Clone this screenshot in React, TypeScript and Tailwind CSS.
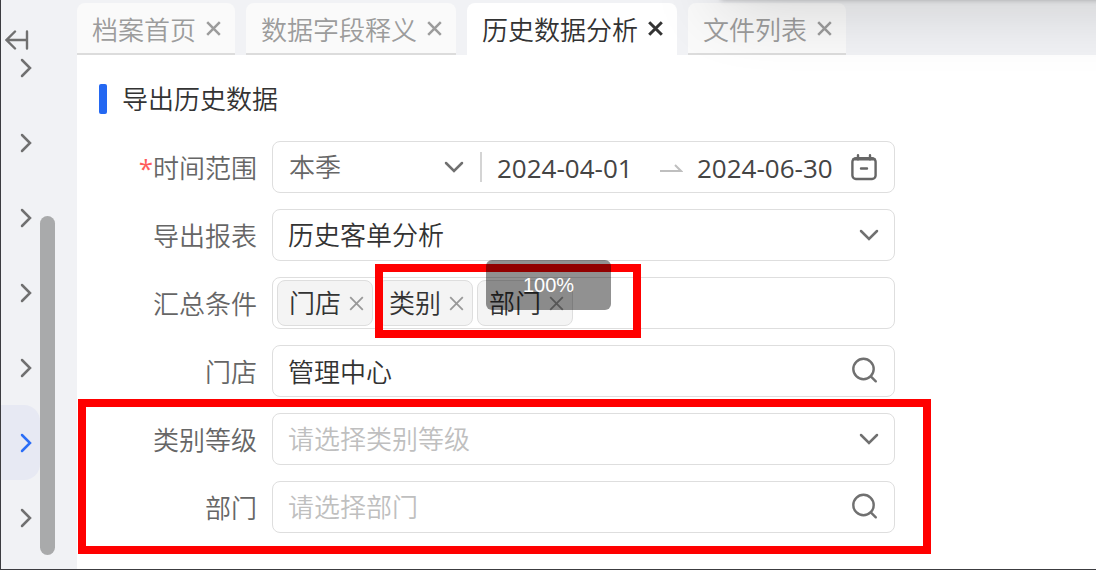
import type { ReactNode } from 'react';

interface Tab {
  label: string;
  active?: boolean;
}

const TABS: Tab[] = [
  { label: '档案首页' },
  { label: '数据字段释义' },
  { label: '历史数据分析', active: true },
  { label: '文件列表' },
];

const MENU_ITEMS = [0, 1, 2, 3, 4, 5, 6];
const ACTIVE_MENU_ITEM = 5;
const CONDITIONS = ['门店', '类别', '部门'];

const FIELD =
  'w-full h-13 rounded-lg border border-[#dedede] bg-white pl-[15px] pr-12 text-[26px] leading-[34px] outline-none placeholder:text-[#bfbfbf]';

function CloseIcon({ strokeWidth }: { strokeWidth: number }) {
  return (
    <svg width="15" height="15" viewBox="0 0 15 15" fill="none" stroke="currentColor" strokeWidth={strokeWidth}>
      <path d="M1.2 1.2l12.6 12.6M13.8 1.2L1.2 13.8" />
    </svg>
  );
}

function ChevronDown() {
  return (
    <svg width="20" height="12" viewBox="0 0 20 12" fill="none" stroke="#707070" strokeWidth="2.5" strokeLinecap="round">
      <path d="M2 2l8 8 8-8" />
    </svg>
  );
}

function ChevronRight() {
  return (
    <svg width="12" height="20" viewBox="0 0 12 20" fill="none" stroke="currentColor" strokeWidth="2.5" strokeLinecap="round">
      <path d="M2 2l8 8-8 8" />
    </svg>
  );
}

function SearchIcon() {
  return (
    <svg width="28" height="28" viewBox="0 0 28 28" fill="none" stroke="#707070" strokeWidth="2.4" strokeLinecap="round">
      <circle cx="12.5" cy="12" r="10.2" />
      <path d="M19.8 19.3l5 5" />
    </svg>
  );
}

function CalendarIcon() {
  return (
    <svg width="28" height="28" viewBox="0 0 28 28" fill="none" stroke="#666" strokeWidth="2.4" strokeLinecap="round">
      <rect x="2.4" y="5.2" width="23.2" height="20.8" rx="3.5" />
      <path d="M3.4 6.2h21.2" />
      <path d="M8 2.2v4M20 2.2v4M11 15.5h6" />
    </svg>
  );
}

function FormRow({ label, htmlFor, required, children }: { label: string; htmlFor: string; required?: boolean; children: ReactNode }) {
  return (
    <div className="flex items-center gap-[15px]">
      <label htmlFor={htmlFor} className="w-[180px] shrink-0 pt-0.5 text-right text-[26px] leading-[34px] text-[#666]">
        {required && <span className="font-normal text-[#ff5c5c]">*</span>}
        {label}
      </label>
      <div className="relative max-w-[623px] flex-1">{children}</div>
    </div>
  );
}

function SelectField({ id, value, placeholder }: { id: string; value: string; placeholder?: boolean }) {
  return (
    <>
      <select id={id} className={`${FIELD} appearance-none ${placeholder ? 'text-[#bfbfbf]' : 'text-[#333]'}`}>
        <option>{value}</option>
      </select>
      <span className="pointer-events-none absolute inset-y-0 right-4 flex items-center">
        <ChevronDown />
      </span>
    </>
  );
}

function SearchField({ id, value, placeholder }: { id: string; value?: string; placeholder?: string }) {
  return (
    <>
      <input id={id} type="text" defaultValue={value} placeholder={placeholder} className={`${FIELD} text-[#333]`} />
      <button type="button" aria-label="搜索" className="absolute inset-y-0 right-4 flex items-center">
        <SearchIcon />
      </button>
    </>
  );
}

function Sidebar() {
  return (
    <aside className="flex w-[76px] shrink-0 bg-[#f1f2f5]">
      <div className="w-[39px] pt-[30px]">
        <button type="button" aria-label="收起" className="block h-5 pl-1">
          <svg width="24" height="20" viewBox="0 0 24 20" fill="none" stroke="#707070" strokeWidth="2.4" strokeLinecap="round">
            <path d="M22 1.5v17M21 10H2M10 1.5L1.5 10l8.5 8.5" />
          </svg>
        </button>
        {/* the menu is scrolled slightly under the collapse button */}
        <nav className="-mt-5">
          {MENU_ITEMS.map((i) => (
            <button
              key={i}
              type="button"
              aria-label={`菜单 ${i + 1}`}
              className={`flex h-[75px] w-full items-center pl-[19px] ${
                i === ACTIVE_MENU_ITEM ? 'rounded-r-2xl bg-[#e7e9f3] text-[#2b6df6]' : 'text-[#707070]'
              }`}
            >
              <ChevronRight />
            </button>
          ))}
        </nav>
      </div>
      <div className="mt-[216px] h-[339px] w-[15px] rounded-full bg-[#a9aaab]" />
    </aside>
  );
}

function TabBar() {
  return (
    <div className="flex gap-[11px] overflow-hidden bg-[#f1f2f5] pt-[3px]">
      {TABS.map((tab) => (
        <div
          key={tab.label}
          className={`flex h-[52px] shrink-0 items-center gap-2.5 rounded-t-lg border-b-2 pr-[14px] pl-[15px] ${
            tab.active ? 'border-white bg-white text-[#333]' : 'border-[#dcdcdc] bg-[#fafafa] text-[#9c9c9c]'
          }`}
        >
          <button type="button" className="pt-1 text-[26px] leading-[34px]">
            {tab.label}
          </button>
          <button type="button" aria-label={`关闭${tab.label}`}>
            <CloseIcon strokeWidth={tab.active ? 3 : 2.5} />
          </button>
        </div>
      ))}
    </div>
  );
}

export default function App() {
  return (
    <div className="relative flex min-h-screen overflow-hidden border-b border-l border-[#3c3c40] bg-white font-['Open_Sans','Noto_Sans_CJK_SC',sans-serif] font-[350]">
      <Sidebar />

      <main className="min-w-0 flex-1">
        <TabBar />

        <form className="flex flex-col pt-[29px]">
          <div className="mb-[27px] flex items-center gap-[15px] pl-[22px]">
            <span className="h-[30px] w-2 rounded-xs bg-[#2468f2]" />
            <h2 className="text-[26px] leading-[30px] font-[350] text-[#333]">导出历史数据</h2>
          </div>

          <div className="flex flex-col gap-4">
            <FormRow label="时间范围" htmlFor="range" required>
              <div className="flex h-13 items-center rounded-lg border border-[#dedede] text-[26px] leading-[34px]">
                <div className="relative w-[207px] shrink-0">
                  <select id="range" className="w-full appearance-none pl-4 text-[#666] outline-none">
                    <option>本季</option>
                  </select>
                  <span className="pointer-events-none absolute inset-y-0 right-4 flex items-center">
                    <ChevronDown />
                  </span>
                </div>
                <span className="h-[30px] w-0.5 shrink-0 bg-[#d4d4d4]" />
                <input aria-label="开始日期" defaultValue="2024-04-01" className="ml-[15px] w-[140px] pt-0.5 font-normal text-[#444] outline-none" />
                <svg className="mx-[22px] mt-1 shrink-0" width="24" height="12" viewBox="0 0 24 12" fill="none" stroke="#bfbfbf" strokeWidth="2">
                  <path d="M1 8h21L16 2" />
                </svg>
                <input aria-label="结束日期" defaultValue="2024-06-30" className="-ml-2 w-[140px] pt-0.5 font-normal text-[#444] outline-none" />
                <button type="button" aria-label="选择日期" className="mr-4 ml-auto">
                  <CalendarIcon />
                </button>
              </div>
            </FormRow>

            <FormRow label="导出报表" htmlFor="report">
              <SelectField id="report" value="历史客单分析" />
            </FormRow>

            <FormRow label="汇总条件" htmlFor="conditions">
              <div className="flex h-13 items-center gap-1 rounded-lg border border-[#dedede] px-1">
                {CONDITIONS.map((name) => (
                  <span
                    key={name}
                    className="flex h-[46px] w-24 shrink-0 items-center justify-between rounded-lg border border-[#dedede] bg-[#f4f4f4] pr-2 pl-[11px] text-[26px] leading-[34px] text-[#333]"
                  >
                    {name}
                    <button type="button" aria-label={`移除${name}`} className="text-[#999]">
                      <CloseIcon strokeWidth={1.8} />
                    </button>
                  </span>
                ))}
                <input id="conditions" type="text" className="min-w-0 flex-1 outline-none" />
              </div>
              <div className="pointer-events-none absolute -top-[13px] left-[103px] h-[74px] w-[266px] border-8 border-[#f00]" />
              <div className="pointer-events-none absolute -top-[17px] left-[214px] flex h-[50px] w-[125px] items-center justify-center rounded-md bg-black/43 font-['Liberation_Sans',sans-serif] text-xl font-normal text-white">
                100%
              </div>
            </FormRow>

            <FormRow label="门店" htmlFor="store">
              <SearchField id="store" value="管理中心" />
            </FormRow>

            <div className="relative flex flex-col gap-4">
              <FormRow label="类别等级" htmlFor="level">
                <SelectField id="level" value="请选择类别等级" placeholder />
              </FormRow>
              <FormRow label="部门" htmlFor="dept">
                <SearchField id="dept" placeholder="请选择部门" />
              </FormRow>
              <div className="pointer-events-none absolute -top-[14px] -bottom-[21px] left-px w-[853px] border-8 border-[#f00]" />
            </div>
          </div>
        </form>
      </main>

      {/* shadow cast by the popup above the window */}
      <div className="pointer-events-none absolute -top-10 -right-24 left-[720px] h-10 shadow-[0_0_5px_rgba(0,0,0,0.25),0_0_70px_rgba(0,0,0,0.24)]" />
    </div>
  );
}
